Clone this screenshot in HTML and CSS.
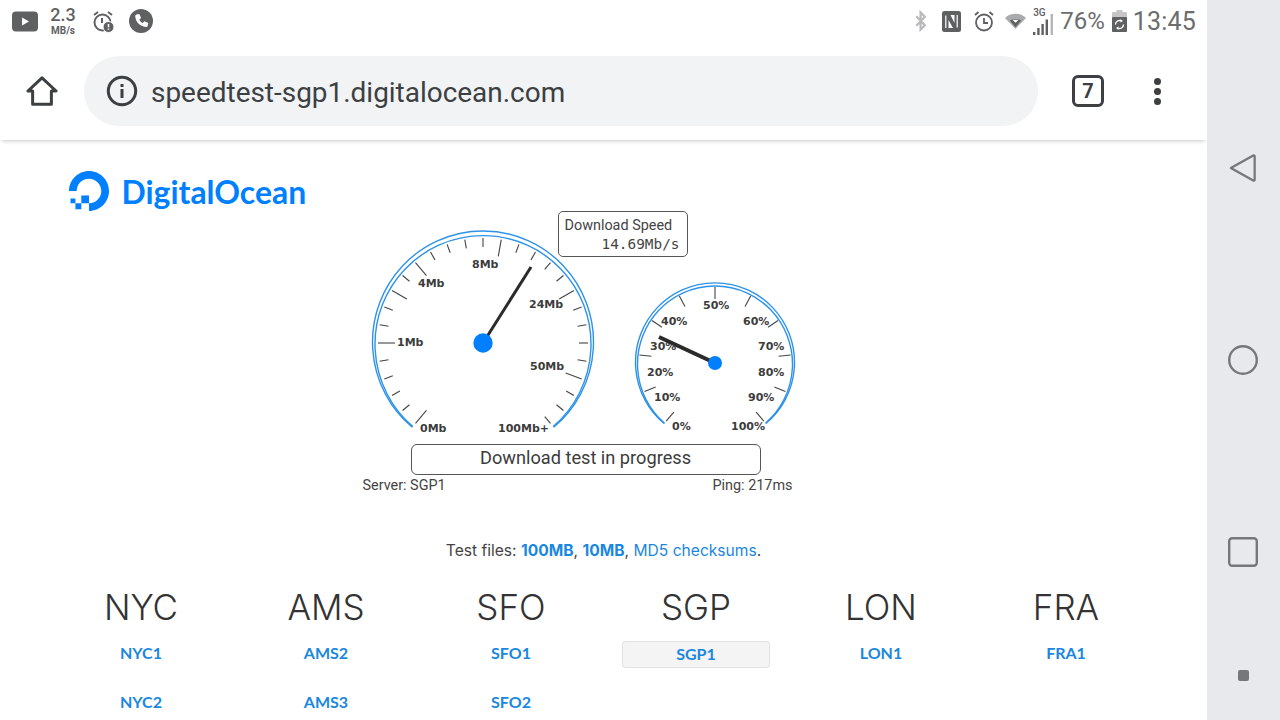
FILE: index.html
```html
<!DOCTYPE html>
<html lang="en">
<head>
<meta charset="utf-8">
<title>DigitalOcean Speedtest</title>
<link rel="stylesheet" href="styles.css">
</head>
<body>
<div class="screen">
  <div class="phone">
    <header class="statusbar">
      <div class="status-left">
        <svg class="ic-yt" viewBox="0 0 26 21"><rect width="26" height="20" y="0.5" rx="4" fill="#5f6062"/><path d="M10 6.500l7 4-7 4z" fill="#fff"/></svg>
        <div class="speed"><span class="speed-n">2.3</span><span class="speed-u">MB/s</span></div>
        <svg class="ic-alarm-miss" viewBox="0 0 24 24" fill="none" stroke="#5f6062" stroke-width="2"><path d="M3 6l4-3M21 6l-4-3"/><circle cx="11.500" cy="13.500" r="8"/><path d="M11 9v5"/><circle cx="17.500" cy="18" r="5.500" fill="#5f6062" stroke="#fff" stroke-width="1"/><path d="M17.500 15v3.200M17.500 19.500v1.200" stroke="#fff" stroke-width="1.500"/></svg>
        <svg class="ic-call" viewBox="0 0 24 24"><circle cx="12" cy="12" r="12" fill="#5f6062"/><path d="M7.500 5.500l2.800-.6 1.800 4-1.800 1.500c.7 1.600 1.900 2.900 3.500 3.700l1.500-1.800 4 1.800-.7 2.800c-.2.800-1 1.300-1.800 1.200C10.800 17.200 6.700 13 6.200 7.300c-.1-.8.500-1.600 1.300-1.800z" fill="#fff"/></svg>
      </div>
      <div class="status-right">
        <svg class="ic-bt" viewBox="0 0 14 24" fill="none" stroke="#b9babc" stroke-width="2.600"><path d="M1.500 6.500l10 10.500-5 5V2l5 5-10 10.500"/></svg>
        <svg class="ic-nfc" viewBox="0 0 19 21"><rect width="19" height="21" rx="2.500" fill="#5f6062"/><path d="M3.800 4.500V17M15.200 4V16.500" fill="none" stroke="#fff" stroke-width="1.200"/><path d="M6.500 9v8h4.500zM8.500 4h4v8z" fill="#fff"/></svg>
        <svg class="ic-clock" viewBox="0 0 22 22" fill="none" stroke="#5f6062" stroke-width="1.800"><circle cx="11" cy="12.500" r="8"/><path d="M11 8v5h4M2 5l3.500-3M20 5l-3.500-3"/></svg>
        <svg class="ic-wifi" viewBox="0 0 24 18"><path d="M0 5.500C6.500-.8 17.500-.8 24 5.500L12 18z" fill="#a9aaad"/><path d="M5.500 8.500c3.700-2.400 9.300-2.400 13 0L12 16z" fill="#5f6062"/><path d="M8.500 7.700h7L12 11z" fill="#fff"/></svg>
        <div class="signal">
          <span class="net">3G</span>
          <svg viewBox="0 0 21 22"><path d="M0 22v-3h2.400v3zM4.200 22v-7h2.400v7zM8.400 22v-11h2.400v11zM12.600 22V6.500H15V22z" fill="#5f6062"/><path d="M17.600 22V1h2.400v21z" fill="#b5b6b8"/></svg>
        </div>
        <span class="pct">76%</span>
        <svg class="ic-batt" viewBox="0 0 15 22"><path d="M4.500 0h6v2h3.500a1 1 0 0 1 1 1v18a1 1 0 0 1-1 1H1a1 1 0 0 1-1-1V3a1 1 0 0 1 1-1h3.500z" fill="#c4c5c7"/><rect y="7" width="15" height="15" rx="1" fill="#5f6062"/><path d="M3.500 14.500a4 4 0 0 1 6-3.500M11.500 14.500a4 4 0 0 1-6 3.500" fill="none" stroke="#fff" stroke-width="1.400"/><path d="M8.500 9v3.500l2.500-1.500zM6.500 20v-3.500L4 18z" fill="#fff"/></svg>
        <span class="clock">13:45</span>
      </div>
    </header>

    <nav class="toolbar">
      <svg class="ic-home" viewBox="0 0 34 32" fill="none" stroke="#3c4043" stroke-width="3.200" stroke-linejoin="round"><path d="M2 16L17 2l15 14h-5v14H7V16z"/></svg>
      <div class="omnibox">
        <svg class="ic-info" viewBox="0 0 32 32"><circle cx="16" cy="16" r="13.700" fill="none" stroke="#3c4043" stroke-width="3"/><rect x="14.500" y="14" width="3" height="9" fill="#3c4043"/><rect x="14.500" y="9" width="3" height="3" fill="#3c4043"/></svg>
        <span class="url">speedtest-sgp1.digitalocean.com</span>
      </div>
      <div class="tabs"><span>7</span></div>
      <div class="menu"><i></i><i></i><i></i></div>
    </nav>

    <main class="page">
      <div class="logo">
        <svg class="logo-mark" viewBox="0 0 40 40"><path d="M20 40v-7.700c7 0 12.300-5.700 12.300-12.300S27 7.700 20 7.700 7.700 13 7.700 20H0C0 9 9 0 20 0s20 9 20 20-9 20-20 20z" fill="#0080ff"/><path d="M20 32.300h-7.700v-7.700H20zM12.300 38.200H6.400v-5.900h5.900zM6.400 32.300H1.500v-4.900h4.900z" fill="#0080ff"/></svg>
        <span class="logo-text">DigitalOcean</span>
      </div>

      <section class="gauges">
        <svg class="gauge-big" viewBox="0 0 240 215">
          <g transform="translate(120 116)">
            <path class="rim" d="M-70.700 84.300A110.500 111 0 1 1 70.700 84.300"/>
            <path class="rim" d="M-70.200 83.600A108 108.500 0 1 1 70.200 83.600"/>
            <g class="tick">
              <line y1="-105" y2="-88" transform="rotate(-140)"/><line y1="-105" y2="-96" transform="rotate(-130)"/><line y1="-105" y2="-96" transform="rotate(-120)"/><line y1="-105" y2="-96" transform="rotate(-110)"/><line y1="-105" y2="-96" transform="rotate(-100)"/><line y1="-105" y2="-88" transform="rotate(-90)"/><line y1="-105" y2="-96" transform="rotate(-80)"/><line y1="-105" y2="-96" transform="rotate(-70)"/><line y1="-105" y2="-88" transform="rotate(-60)"/><line y1="-105" y2="-96" transform="rotate(-50)"/><line y1="-105" y2="-88" transform="rotate(-40)"/><line y1="-105" y2="-96" transform="rotate(-30)"/><line y1="-105" y2="-96" transform="rotate(-20)"/><line y1="-105" y2="-96" transform="rotate(-10)"/><line y1="-105" y2="-96" transform="rotate(0)"/><line y1="-105" y2="-88" transform="rotate(10)"/><line y1="-105" y2="-96" transform="rotate(20)"/><line y1="-105" y2="-96" transform="rotate(30)"/><line y1="-105" y2="-96" transform="rotate(40)"/><line y1="-105" y2="-96" transform="rotate(50)"/><line y1="-105" y2="-88" transform="rotate(60)"/><line y1="-105" y2="-96" transform="rotate(70)"/><line y1="-105" y2="-96" transform="rotate(80)"/><line y1="-105" y2="-96" transform="rotate(90)"/><line y1="-105" y2="-96" transform="rotate(100)"/><line y1="-105" y2="-88" transform="rotate(110)"/><line y1="-105" y2="-96" transform="rotate(120)"/><line y1="-105" y2="-96" transform="rotate(130)"/><line y1="-105" y2="-96" transform="rotate(140)"/>
            </g>
            <g class="glabel">
              <text x="-63" y="89">0Mb</text>
              <text x="15" y="89">100Mb+</text>
              <text x="-86" y="3">1Mb</text>
              <text x="-65" y="-56">4Mb</text>
              <text x="-11" y="-75">8Mb</text>
              <text x="46" y="-35">24Mb</text>
              <text x="47" y="27">50Mb</text>
            </g>
            <line class="needle" x1="0" y1="0" x2="48" y2="-76"/>
            <circle class="hub" r="9.700"/>
          </g>
        </svg>
        <div class="tip">
          <div class="tip-a">Download Speed</div>
          <div class="tip-b">14.69Mb/s</div>
        </div>
        <svg class="gauge-small" viewBox="0 0 170 160">
          <g transform="translate(85 85)">
            <path class="rim" d="M-50.800 60.500A79.500 79.500 0 1 1 50.800 60.500"/>
            <path class="rim" d="M-50.500 60.200A77.500 78 0 1 1 50.500 60.200"/>
            <g class="tick">
              <line y1="-76" y2="-64" transform="rotate(-140)"/><line y1="-76" y2="-64" transform="rotate(-112)"/><line y1="-76" y2="-64" transform="rotate(-84)"/><line y1="-76" y2="-64" transform="rotate(-56)"/><line y1="-76" y2="-64" transform="rotate(-28)"/><line y1="-76" y2="-64" transform="rotate(0)"/><line y1="-76" y2="-64" transform="rotate(28)"/><line y1="-76" y2="-64" transform="rotate(56)"/><line y1="-76" y2="-64" transform="rotate(84)"/><line y1="-76" y2="-64" transform="rotate(112)"/><line y1="-76" y2="-64" transform="rotate(140)"/>
            </g>
            <g class="glabel small">
              <text x="-43" y="67">0%</text>
              <text x="16" y="67">100%</text>
              <text x="-61" y="38">10%</text>
              <text x="-68" y="13">20%</text>
              <text x="-65" y="-13">30%</text>
              <text x="-54" y="-38">40%</text>
              <text x="-12" y="-54">50%</text>
              <text x="28" y="-38">60%</text>
              <text x="43" y="-13">70%</text>
              <text x="43" y="13">80%</text>
              <text x="33" y="38">90%</text>
            </g>
            <line class="needle thick" x1="0" y1="0" x2="-56" y2="-26"/>
            <circle class="hub" r="7"/>
          </g>
        </svg>
      </section>

      <div class="progress">Download test in progress</div>
      <div class="meta"><span>Server: SGP1</span><span>Ping: 217ms</span></div>

      <p class="files">Test files: <a class="strong">100MB</a>, <a class="strong">10MB</a>, <a>MD5 checksums</a>.</p>

      <div class="regions">
        <div class="region"><h2>NYC</h2><a>NYC1</a><a>NYC2</a></div>
        <div class="region"><h2>AMS</h2><a>AMS2</a><a>AMS3</a></div>
        <div class="region"><h2>SFO</h2><a>SFO1</a><a>SFO2</a></div>
        <div class="region"><h2>SGP</h2><a class="active">SGP1</a></div>
        <div class="region"><h2>LON</h2><a>LON1</a></div>
        <div class="region"><h2>FRA</h2><a>FRA1</a></div>
      </div>
    </main>
  </div>

  <aside class="navbar">
    <svg class="nav-back" viewBox="0 0 30 30" fill="none" stroke="#767779" stroke-width="2.400" stroke-linejoin="round"><path d="M2 15L26 1.500c.6-.3 1.500 0 1.500 1v25c0 1-.9 1.300-1.500 1z"/></svg>
    <svg class="nav-home" viewBox="0 0 30 30"><circle cx="15" cy="15" r="13.800" fill="none" stroke="#767779" stroke-width="2.400"/></svg>
    <svg class="nav-recent" viewBox="0 0 30 30"><rect x="1.200" y="1.200" width="27.600" height="27.600" rx="3" fill="none" stroke="#767779" stroke-width="2.400"/></svg>
    <i class="nav-dot"></i>
  </aside>
</div>
</body>
</html>
```
FILE: styles.css
```css
* { box-sizing: border-box; }
html, body { margin: 0; padding: 0; width: 1280px; height: 720px; overflow: hidden; background: #fff; }
body { font-family: Roboto, sans-serif; color: #3c3c3c; }
svg { display: block; flex: none; }

.screen { display: flex; width: 1280px; height: 720px; }
.phone { width: 1207px; height: 720px; overflow: hidden; display: flex; flex-direction: column; }

.statusbar { height: 42px; flex: none; display: flex; justify-content: space-between; align-items: center; padding: 0 11px 0 12px; color: #5f6062; }
.status-left, .status-right { display: flex; align-items: center; }
.ic-yt { width: 26px; height: 21px; }
.speed { display: flex; flex-direction: column; align-items: center; width: 28px; margin-left: 11px; margin-top: -2px; font-family: Roboto, sans-serif; }
.speed-n { font-size: 18px; font-weight: 500; line-height: 21px; }
.speed-u { font-size: 10px; line-height: 12px; font-weight: 700; }
.ic-alarm-miss { width: 24px; height: 24px; margin-left: 14px; }
.ic-call { width: 24px; height: 24px; margin-left: 14px; }
.ic-bt { width: 12px; height: 22px; }
.ic-nfc { width: 19px; height: 21px; margin-left: 15px; }
.ic-clock { width: 22px; height: 22px; margin-left: 12px; }
.ic-wifi { width: 21px; height: 16px; margin-left: 10px; }
.signal { position: relative; width: 21px; height: 24px; margin-left: 7px; }
.signal svg { width: 21px; height: 22px; position: absolute; right: 0; bottom: -2px; }
.net { position: absolute; left: 0; top: -2px; font-size: 10px; line-height: 12px; font-weight: 500; color: #5f6062; }
.pct { font-size: 24px; margin-left: 6px; color: #6b6c6e; }
.ic-batt { width: 15px; height: 22px; margin-left: 7px; }
.clock { font-size: 25px; margin-left: 6px; color: #6b6c6e; letter-spacing: .2px; }

.toolbar { height: 98px; flex: none; display: flex; align-items: center; position: relative; z-index: 1; background: #fff; box-shadow: 0 3px 4px -2px rgba(0,0,0,.22); padding: 0 0 0 26px; }
.ic-home { width: 32px; height: 30px; }
.omnibox { width: 954px; height: 70px; margin-left: 26px; border-radius: 35px; background: #f1f3f4; display: flex; align-items: center; padding-left: 22px; }
.ic-info { width: 32px; height: 32px; }
.url { margin-left: 13px; padding-top: 2px; font-size: 27.950px; color: #3c4043; white-space: nowrap; }
.tabs { width: 32px; height: 32px; margin-left: 34px; border: 3px solid #3c4043; border-radius: 6px; display: flex; align-items: center; justify-content: center; font-size: 20px; font-weight: 700; color: #3c4043; }
.menu { margin-left: 49.500px; display: flex; flex-direction: column; gap: 3px; }
.menu i { display: block; width: 7px; height: 7px; border-radius: 50%; background: #3c4043; }

.page { flex: 1; padding: 31px 48.500px 0; position: relative; }
.logo { display: flex; align-items: center; padding-left: 20px; height: 40px; }
.logo-mark { width: 40px; height: 40px; }
.logo-text { margin-left: 13px; padding-top: 2px; font-family: Lato, sans-serif; font-weight: 700; font-size: 31.900px; color: #0080ff; }

.gauges { position: relative; height: 233px; display: flex; align-items: flex-start; padding-left: 314px; }
.gauge-big { width: 240px; height: 215px; margin-top: 16px; }
.gauge-small { width: 170px; height: 160px; margin-top: 67px; margin-left: 27px; }
.rim { fill: none; stroke: #2e93e8; stroke-width: 1.400; }
.tick line { stroke: #444; stroke-width: 1.100; }
.glabel text { font-family: "DejaVu Sans", sans-serif; font-weight: 700; font-size: 11px; fill: #3c3c3c; }
.needle { stroke: #2b2b2b; stroke-width: 3; }
.needle.thick { stroke-width: 4; }
.hub { fill: #0080ff; }

.tip { position: absolute; left: 509px; top: 0; width: 130px; height: 46px; background: #fff; border: 1.500px solid #555; border-radius: 5px; padding: 5px 7px 4px 6px; font-size: 14.400px; line-height: 18px; color: #444; }
.tip-b { font-family: "DejaVu Sans Mono", monospace; text-align: right; font-size: 14.400px; }

.progress { width: 350px; height: 31px; margin-left: 362px; border: 1.500px solid #555; border-radius: 6px; text-align: center; font-size: 18.200px; line-height: 25px; color: #3c3c3c; }
.meta { display: flex; justify-content: space-between; width: 430px; margin-left: 314px; font-size: 14.400px; line-height: 22px; color: #444; }

.files { margin: 43px 0 0; text-align: center; font-family: Inter, sans-serif; font-size: 15.600px; line-height: 22px; color: #444; }
.files a { color: #1a87e0; }
.files .strong { font-weight: 700; }

.regions { display: grid; grid-template-columns: repeat(6, 185px); margin-top: 23px; }
.region { display: flex; flex-direction: column; align-items: center; }
.region h2 { margin: 0 0 11px; font-family: Inter, sans-serif; font-weight: 300; font-size: 35px; line-height: 44px; color: #333; }
.region a { display: block; width: 148px; height: 27px; text-align: center; font-family: Lato, sans-serif; font-weight: 700; font-size: 16px; line-height: 24px; color: #1a87e0; margin-bottom: 22px; border: 1px solid transparent; border-radius: 3px; }
.region a.active { background: #f4f4f4; border-color: #e2e2e2; position: relative; top: 1px; }

.navbar { width: 73px; height: 720px; background: #e8e9ed; display: flex; flex-direction: column; align-items: center; padding: 153px 1px 0 0; }
.nav-back { width: 28px; height: 30px; }
.nav-home { width: 30px; height: 30px; margin-top: 162px; }
.nav-recent { width: 30px; height: 30px; margin-top: 162px; }
.nav-dot { display: block; width: 11px; height: 11px; border-radius: 2px; background: #767779; margin-top: 103px; }
```
